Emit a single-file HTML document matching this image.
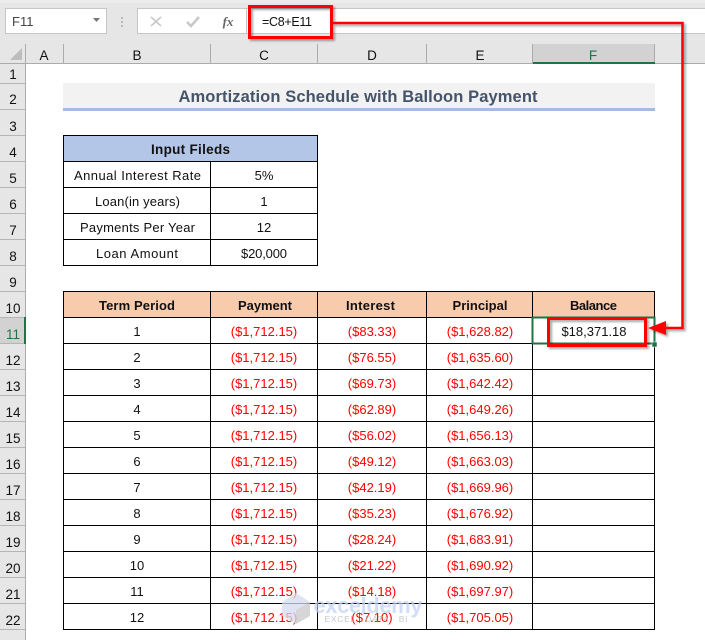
<!DOCTYPE html>
<html><head><meta charset="utf-8"><style>
html,body{margin:0;padding:0;background:#fff}
svg{display:block}
text{font-family:"Liberation Sans",sans-serif;font-size:13px;fill:#111;text-anchor:middle}
.r text{fill:#f00}
.b{font-weight:700}
.h text{font-size:13.5px}
</style></head><body>
<svg width="705" height="640" viewBox="0 0 705 640" xmlns="http://www.w3.org/2000/svg">
<defs><filter id="s" x="-5%" y="-5%" width="110%" height="110%"><feDropShadow dx="2" dy="2" stdDeviation="1" flood-color="#000" flood-opacity=".35"/></filter></defs>
<rect width="705" height="640" fill="#fff"/>
<rect width="705" height="64" fill="#e6e6e6"/>
<rect y="0" width="705" height="3" fill="#ececec"/>
<!-- name box -->
<rect x="5.500" y="8.500" width="101" height="25" fill="#fff" stroke="#c6c6c6"/>
<text x="12" y="26" style="text-anchor:start;fill:#444">F11</text>
<path d="M93 18h7l-3.500 4z" fill="#777"/>
<path d="M122 17v2M122 21v2M122 25v2" stroke="#aaa" stroke-width="1.500"/>
<!-- formula buttons -->
<rect x="137.500" y="8.500" width="600" height="25" fill="#fff" stroke="#c6c6c6"/>
<path d="M151 17l10 9M161 17l-10 9" stroke="#c8c8c8" stroke-width="1.600" fill="none"/>
<path d="M187 22l4 4 8-9" stroke="#c8c8c8" stroke-width="2.600" fill="none"/>
<text x="228" y="26" style="font-family:'Liberation Serif',serif;font-style:italic;font-weight:700;font-size:13px;fill:#666">fx</text>
<path d="M246.500 9v24" stroke="#c6c6c6"/>
<text x="262" y="26" style="text-anchor:start;font-size:12.500px" textLength="50">=C8+E11</text>
<!-- column header -->
<rect x="533" y="44" width="122" height="19" fill="#d2d2d2"/>
<path d="M0 63.500H705" stroke="#ababab"/>
<path d="M25.500 44v20M63.500 44v19M210.500 44v19M317.500 44v19M426.500 44v19M532.500 44v19M654.500 44v19" stroke="#ababab"/>
<path d="M22 48v12H10z" fill="#bdbdbd"/>
<rect x="533" y="62" width="122" height="2" fill="#217346"/>
<g class="h">
<text x="44" y="60">A</text><text x="137" y="60">B</text><text x="264" y="60">C</text><text x="372" y="60">D</text><text x="480" y="60">E</text><text x="593" y="60" style="fill:#217346">F</text>
</g>
<!-- row header -->
<rect x="0" y="64" width="25" height="576" fill="#e6e6e6"/>
<rect x="0" y="317" width="25" height="26" fill="#d2d2d2"/>
<path d="M25.500 64V640" stroke="#ababab"/>
<path d="M0 83.500H25M0 109.500H25M0 135.500H25M0 161.500H25M0 187.500H25M0 213.500H25M0 239.500H25M0 265.500H25M0 291.500H25M0 317.500H25M0 343.500H25M0 369.500H25M0 395.500H25M0 421.500H25M0 447.500H25M0 473.500H25M0 499.500H25M0 525.500H25M0 551.500H25M0 577.500H25M0 603.500H25M0 629.500H25" stroke="#b5b5b5"/>
<rect x="24" y="317" width="2" height="27" fill="#217346"/>
<g class="h">
<text x="13" y="79">1</text><text x="13" y="104">2</text><text x="13" y="131">3</text><text x="13" y="157">4</text><text x="13" y="183">5</text><text x="13" y="209">6</text><text x="13" y="235">7</text><text x="13" y="261">8</text><text x="13" y="287">9</text><text x="13" y="313">10</text><text x="13" y="339" style="fill:#217346">11</text><text x="13" y="365">12</text><text x="13" y="391">13</text><text x="13" y="417">14</text><text x="13" y="443">15</text><text x="13" y="469">16</text><text x="13" y="495">17</text><text x="13" y="521">18</text><text x="13" y="547">19</text><text x="13" y="573">20</text><text x="13" y="599">21</text><text x="13" y="625">22</text>
</g>
<!-- title -->
<rect x="63" y="83" width="592" height="25" fill="#f2f2f2"/>
<rect x="63" y="108" width="592" height="3" fill="#a5bbe1"/>
<text x="358" y="102" class="b" style="font-size:16.500px;fill:#44546a" textLength="359">Amortization Schedule with Balloon Payment</text>
<!-- input table -->
<rect x="63" y="135" width="255" height="26" fill="#b4c6e7"/>
<path d="M63.500 135.500H317.500V265.500H63.500ZM63.500 161.500H317.500M63.500 187.500H317.500M63.500 213.500H317.500M63.500 239.500H317.500M210.500 161.500V265.500" fill="none" stroke="#000"/>
<text x="190.500" y="154" class="b" style="font-size:13.500px" textLength="79">Input Fileds</text>
<text x="137.500" y="180" textLength="127">Annual Interest Rate</text><text x="264" y="180">5%</text>
<text x="137.500" y="206" textLength="85">Loan(in years)</text><text x="264" y="206">1</text>
<text x="137.500" y="232" textLength="115">Payments Per Year</text><text x="264" y="232">12</text>
<text x="137" y="258" textLength="82">Loan Amount</text><text x="264" y="258" textLength="46">$20,000</text>
<!-- main table -->
<rect x="63" y="291" width="592" height="26" fill="#f8cbad"/>
<path d="M63.500 291.500H654.500V629.500H63.500ZM63.500 317.500H654.500M63.500 343.500H654.500M63.500 369.500H654.500M63.500 395.500H654.500M63.500 421.500H654.500M63.500 447.500H654.500M63.500 473.500H654.500M63.500 499.500H654.500M63.500 525.500H654.500M63.500 551.500H654.500M63.500 577.500H654.500M63.500 603.500H654.500M210.500 291.500V629.500M317.500 291.500V629.500M426.500 291.500V629.500M532.500 291.500V629.500" fill="none" stroke="#000"/>
<g class="b"><text x="137" y="310" textLength="76">Term Period</text><text x="265" y="310" textLength="54">Payment</text><text x="370.500" y="310" textLength="49">Interest</text><text x="480" y="310">Principal</text><text x="593.500" y="310" textLength="47">Balance</text></g>
<text x="137" y="336">1</text><text x="137" y="362">2</text><text x="137" y="388">3</text><text x="137" y="414">4</text><text x="137" y="440">5</text><text x="137" y="466">6</text><text x="137" y="492">7</text><text x="137" y="518">8</text><text x="137" y="544">9</text><text x="137" y="570">10</text><text x="137" y="596">11</text><text x="137" y="622">12</text>
<g class="r">
<text x="264" y="336">($1,712.15)</text><text x="372" y="336">($83.33)</text><text x="480" y="336">($1,628.82)</text>
<text x="264" y="362">($1,712.15)</text><text x="372" y="362">($76.55)</text><text x="480" y="362">($1,635.60)</text>
<text x="264" y="388">($1,712.15)</text><text x="372" y="388">($69.73)</text><text x="480" y="388">($1,642.42)</text>
<text x="264" y="414">($1,712.15)</text><text x="372" y="414">($62.89)</text><text x="480" y="414">($1,649.26)</text>
<text x="264" y="440">($1,712.15)</text><text x="372" y="440">($56.02)</text><text x="480" y="440">($1,656.13)</text>
<text x="264" y="466">($1,712.15)</text><text x="372" y="466">($49.12)</text><text x="480" y="466">($1,663.03)</text>
<text x="264" y="492">($1,712.15)</text><text x="372" y="492">($42.19)</text><text x="480" y="492">($1,669.96)</text>
<text x="264" y="518">($1,712.15)</text><text x="372" y="518">($35.23)</text><text x="480" y="518">($1,676.92)</text>
<text x="264" y="544">($1,712.15)</text><text x="372" y="544">($28.24)</text><text x="480" y="544">($1,683.91)</text>
<text x="264" y="570">($1,712.15)</text><text x="372" y="570">($21.22)</text><text x="480" y="570">($1,690.92)</text>
<text x="264" y="596">($1,712.15)</text><text x="372" y="596">($14.18)</text><text x="480" y="596">($1,697.97)</text>
<text x="264" y="622">($1,712.15)</text><text x="372" y="622">($7.10)</text><text x="480" y="622">($1,705.05)</text>
</g>
<text x="594" y="336">$18,371.18</text>
<!-- selection -->
<rect x="532.500" y="317.500" width="122" height="26" fill="none" stroke="#217346" stroke-width="2"/>
<rect x="652" y="342" width="5" height="5" fill="#217346" stroke="#fff" stroke-width=".5"/>
<!-- watermark -->
<g opacity=".75">
<path d="M282 602l14-9 14 9v14l-14 8-14-8z" fill="#d3dcef"/>
<path d="M296 610l14-8v14l-14 8z" fill="#c9c9c9"/>
<text x="368" y="613" class="b" style="font-size:22px;fill:#c3d3f5" textLength="109">exceldemy</text>
<text x="366" y="622" style="font-size:8.500px;fill:#b5b5b5" textLength="83">EXCEL · DATA · BI</text>
</g>
<!-- red annotations -->
<g filter="url(#s)">
<rect x="249.500" y="6.500" width="82" height="31" fill="none" stroke="#f00" stroke-width="3"/>
<rect x="548.500" y="318.500" width="97" height="27" fill="none" stroke="#f00" stroke-width="3"/>
<path d="M332 23H682.500V328H660" fill="none" stroke="#f00" stroke-width="2.500"/>
<path d="M648 328l18-7v14z" fill="#f00"/>
</g>
</svg>
</body></html>
